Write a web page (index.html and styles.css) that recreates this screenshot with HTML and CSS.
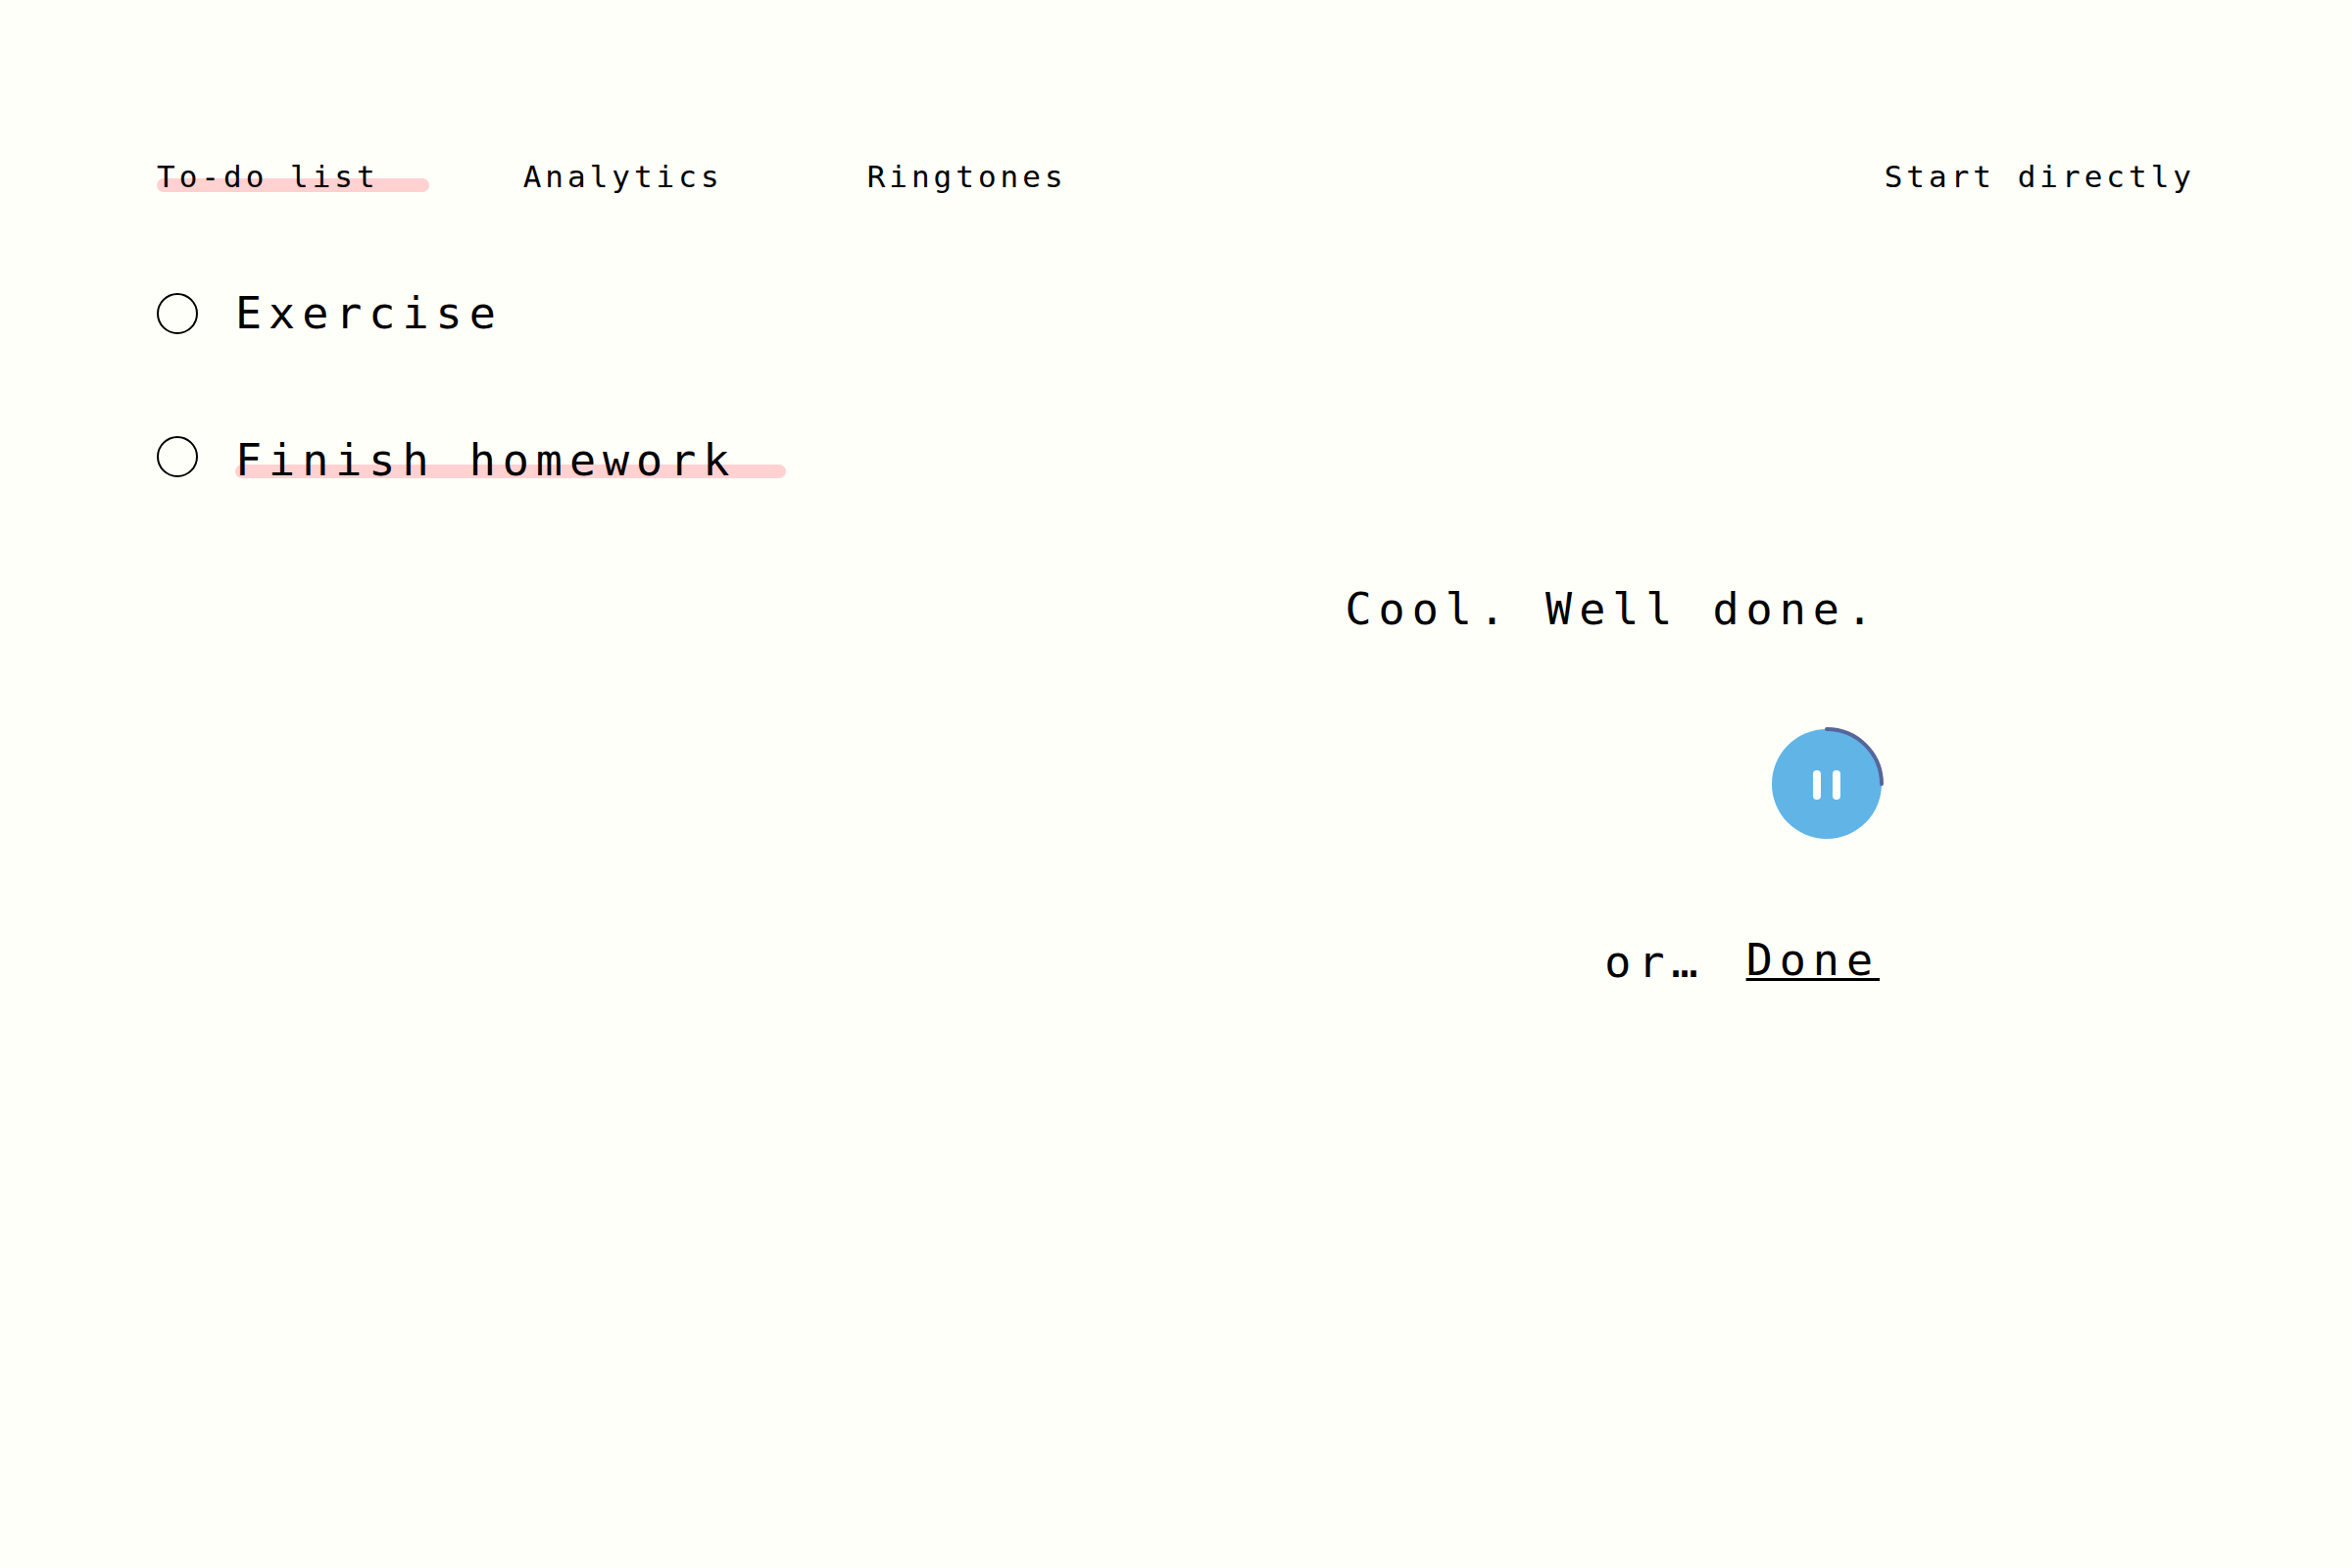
FILE: index.html
```html
<!DOCTYPE html>
<html lang="en">
<head>
<meta charset="utf-8">
<meta name="viewport" content="width=device-width, initial-scale=1">
<title>To-do list</title>
<link rel="stylesheet" href="styles.css">
</head>
<body>
<header class="header">
  <nav class="nav">
    <a class="nav-link marked" href="#todo" aria-current="page">To-do list</a>
    <a class="nav-link" href="#analytics">Analytics</a>
    <a class="nav-link" href="#ringtones">Ringtones</a>
  </nav>
  <a class="start" href="#start">Start directly</a>
</header>
<main>
  <ul class="todos">
    <li class="todo">
      <input class="tick" type="checkbox" id="exercise">
      <label for="exercise">Exercise</label>
    </li>
    <li class="todo">
      <input class="tick" type="checkbox" id="homework">
      <label class="current marked" for="homework">Finish homework</label>
    </li>
  </ul>
  <section class="timer">
    <p class="message">Cool. Well done.</p>
    <button class="pause" type="button" aria-label="Pause">
      <svg class="dial" viewBox="0 0 112 112" aria-hidden="true">
        <circle cx="56" cy="56" r="56" fill="#60b5e6"/>
        <path d="M56 0A56 56 0 0 1 112 56" fill="none" stroke="#56669a" stroke-width="4" stroke-linecap="round"/>
        <rect x="42" y="42" width="8" height="30" rx="4" fill="#fffffa"/>
        <rect x="62" y="42" width="8" height="30" rx="4" fill="#fffffa"/>
      </svg>
    </button>
    <div class="actions">
      <span class="or">or…</span>
      <button class="done" type="button">Done</button>
    </div>
  </section>
</main>
</body>
</html>
```
FILE: styles.css
```css
* {
  box-sizing: border-box;
}

body {
  margin: 0;
  padding: 160px;
  min-height: 100vh;
  background: #fffffa;
  color: #000;
  font: 45px/60px "DejaVu Sans Mono", monospace;
  letter-spacing: 7px;
}

a {
  color: inherit;
  text-decoration: none;
}

button {
  padding: 0;
  border: 0;
  background: none;
  color: inherit;
  font: inherit;
  letter-spacing: inherit;
  cursor: pointer;
}

.header {
  display: flex;
  justify-content: space-between;
  font-size: 31px;
  line-height: 40px;
  letter-spacing: 4px;
}

.nav {
  display: flex;
  gap: 96px;
}

.nav-link {
  padding-right: 51px;
}

/* Marker stroke behind the selected text */
.marked {
  position: relative;
  z-index: 0;
}

.marked::before {
  content: "";
  position: absolute;
  z-index: -1;
  left: 0;
  right: 0;
  bottom: 4px;
  height: 14px;
  border-radius: 7px;
  background: #ffd1d1;
}

.todos {
  display: flex;
  flex-direction: column;
  gap: 82px;
  margin: 90px 0 92px;
  padding: 0;
  list-style: none;
}

.todo {
  display: flex;
  align-items: center;
  gap: 38px;
}

.tick {
  appearance: none;
  width: 42px;
  height: 42px;
  margin: 0;
  border: 2px solid #000;
  border-radius: 50%;
}

.tick:checked {
  background: #60b5e6;
}

.current {
  padding: 8px 51px 0 0;
}

.current::before {
  bottom: 12px;
}

.timer {
  display: flex;
  flex-direction: column;
  align-items: flex-end;
  gap: 92px;
  margin-right: 320px;
}

.message {
  margin: 0;
  padding-right: 2px;
}

.pause,
.dial {
  display: block;
  width: 112px;
  height: 112px;
}

.dial {
  overflow: visible;
}

.actions {
  display: flex;
  align-items: center;
  gap: 42px;
  padding-right: 2px;
}

.or {
  padding-top: 4px;
}

.done {
  text-decoration: underline;
  text-decoration-thickness: 3px;
  text-underline-offset: 3px;
  text-decoration-skip-ink: none;
}
```
